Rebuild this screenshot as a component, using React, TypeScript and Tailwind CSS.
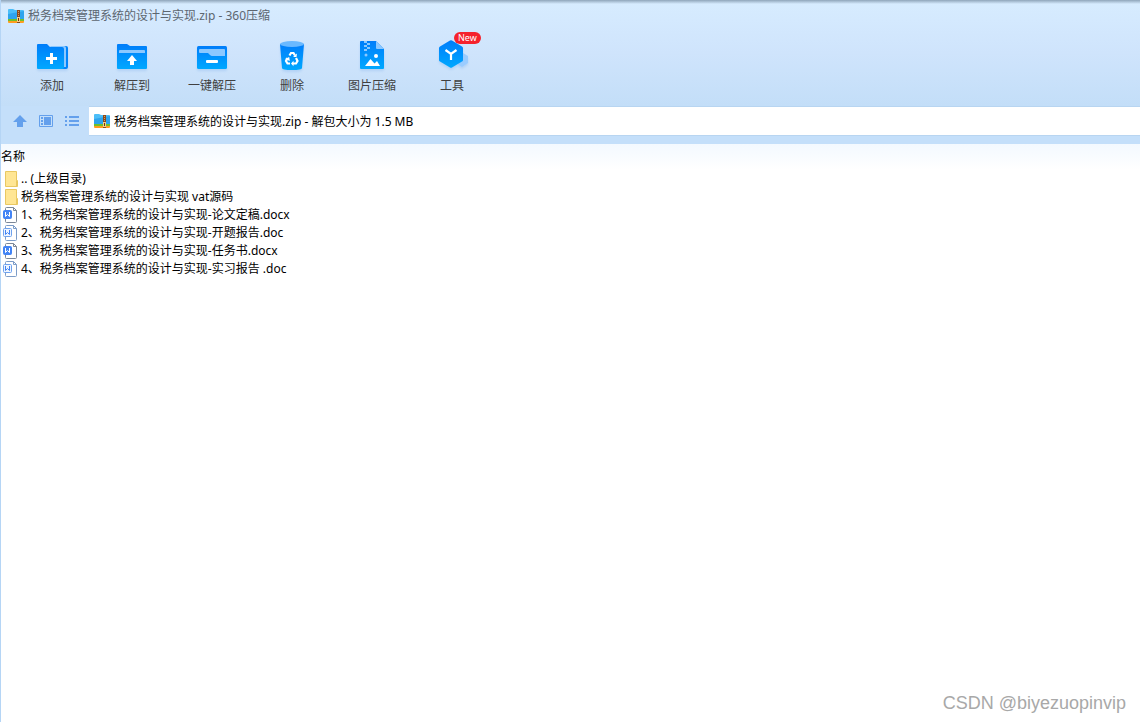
import type {ReactNode} from 'react';

const ARCHIVE = '税务档案管理系统的设计与实现.zip';

type FileKind = 'folder' | 'docx' | 'doc';

const files: {name: string; kind: FileKind}[] = [
  {name: '.. (上级目录)', kind: 'folder'},
  {name: '税务档案管理系统的设计与实现 vat源码', kind: 'folder'},
  {name: '1、税务档案管理系统的设计与实现-论文定稿.docx', kind: 'docx'},
  {name: '2、税务档案管理系统的设计与实现-开题报告.doc', kind: 'doc'},
  {name: '3、税务档案管理系统的设计与实现-任务书.docx', kind: 'docx'},
  {name: '4、税务档案管理系统的设计与实现-实习报告 .doc', kind: 'doc'},
];

function ZipIcon() {
  return (
    <svg className="shrink-0" width="16" height="14" viewBox="0 0 16 14" aria-hidden="true">
      <path d="M0 1q0-1 1-1h4l2 1h8q1 0 1 1v8H0z" fill="#4cbef8" />
      <path d="M0 5l16-3v8H0z" fill="#1b93e6" opacity=".6" />
      <path d="M0 10h16v2H0z" fill="#6fc02c" />
      <path d="M0 12h16v1q0 1-1 1H1q-1 0-1-1z" fill="#ff9d1f" />
      <path d="M9 1h3v13H9z" fill="#8a4a1c" />
      <path d="M10 2h1v1h-1zM10 4h1v1h-1zM10 6h1v1h-1z" fill="#d99a5c" />
      <path d="M9 8h3v5H9z" fill="#f6cf85" />
      <path d="M10 9h1v3h-1z" fill="#6b3410" />
    </svg>
  );
}

function ToolSvg({children}: {children: ReactNode}) {
  return (
    <svg width="36" height="36" viewBox="0 0 36 36" className="drop-shadow-[0_2px_1px_rgba(80,150,230,0.2)]" aria-hidden="true">
      {children}
    </svg>
  );
}

function AddIcon() {
  return (
    <ToolSvg>
      <path d="M18 8h14q2 0 2 2v19q0 2-2 2H18z" fill="#0084fb" />
      <path d="M16 8h14q2 0 2 2v19h-2z" fill="#8cc8ff" />
      <path d="M3 7q0-1 1-1h9l3 3h12q2 0 2 2v18q0 2-2 2H4q-1 0-1-1z" fill="url(#toolBlue)" />
      <path d="M16 15h3v4h4v3h-4v4h-3v-4h-4v-3h4z" fill="#fff" />
    </ToolSvg>
  );
}

function ExtractIcon() {
  return (
    <ToolSvg>
      <path d="M3 7q0-1 1-1h9l3 2h16q1 0 1 1v21q0 1-1 1H4q-1 0-1-1z" fill="url(#toolBlue)" />
      <path d="M5 13q0-1 1-1h24q1 0 1 1v2H5z" fill="#8cc8ff" />
      <path d="M18 17l5 6h-3v4h-4v-4h-3z" fill="#fff" />
    </ToolSvg>
  );
}

function OneKeyIcon() {
  return (
    <ToolSvg>
      <rect x="3" y="8" width="30" height="23" rx="1.500" fill="url(#toolBlue)" />
      <path d="M5 12q0-1 1-1h24q1 0 1 1v6H18q-1 0-2-1l-2-2H6q-1 0-1-1z" fill="#8cc8ff" />
      <rect x="12" y="22" width="12" height="3" rx="1" fill="#fff" />
    </ToolSvg>
  );
}

function DeleteIcon() {
  return (
    <ToolSvg>
      <path d="M6 6h24l-2 24q0 2-10 2T8 30z" fill="url(#toolBlue)" />
      <ellipse cx="18" cy="6" rx="12" ry="3" fill="#6ab9ff" />
      <path d="M15.500 17.500L17 15h2.500l1.500 2.500M22 20l1.500 3-1.500 2.500h-3M16 25.500h-2.500l-1.500-2.500 1.500-3" fill="none" stroke="#fff" strokeWidth="2.200" />
      <path d="M19 19h3.500l.5-3.500zM19.500 22.800v5.400L17 25.500zM11 21l4.200-2 .6 4z" fill="#fff" />
    </ToolSvg>
  );
}

function ImageIcon() {
  return (
    <ToolSvg>
      <path d="M6 4q0-1 1-1h15l8 8v19q0 1-1 1H7q-1 0-1-1z" fill="url(#toolBlue)" />
      <path d="M22 3l8 8h-7q-1 0-1-1z" fill="#8cc8ff" />
      <path d="M10 3h3v2h-3zM13 5h3v2h-3zM10 7h3v2h-3zM13 9h3v2h-3zM10 11h3v2h-3z" fill="#8cc8ff" />
      <circle cx="12" cy="17" r="1.500" fill="#8cc8ff" />
      <circle cx="22" cy="18" r="2" fill="#fff" />
      <path d="M11 28l5.500-7 4 4.500 2.500-2.500 3 5z" fill="#fff" />
    </ToolSvg>
  );
}

function ToolsIcon() {
  return (
    <ToolSvg>
      <path d="M29 15l5 3v7l-6 4-6-4z" fill="#9accff" />
      <path d="M16 2.500q1-.6 2 0l10 6q1 .5 1 1.500v12q0 1-1 1.500l-10 6q-1 .5-2 0l-10-6q-1-.5-1-1.500V10q0-1 1-1.500z" fill="url(#toolBlue)" />
      <path d="M11.500 12l5.500 4 5.500-4M17 16v6" fill="none" stroke="#fff" strokeWidth="2.200" />
    </ToolSvg>
  );
}

const tools: {label: string; icon: ReactNode; badge?: string}[] = [
  {label: '添加', icon: <AddIcon />},
  {label: '解压到', icon: <ExtractIcon />},
  {label: '一键解压', icon: <OneKeyIcon />},
  {label: '删除', icon: <DeleteIcon />},
  {label: '图片压缩', icon: <ImageIcon />},
  {label: '工具', icon: <ToolsIcon />, badge: 'New'},
];

function FileIcon({kind}: {kind: FileKind}) {
  if (kind === 'folder') {
    return (
      <svg width="16" height="16" viewBox="0 0 16 16" aria-hidden="true">
        <path d="M2.500.5h11v9h1v6h-12z" fill="#ffe694" stroke="#e9c862" />
        <path d="M13.500 9.500v6" stroke="#e9c862" />
      </svg>
    );
  }
  const solid = kind === 'docx';
  const edge = solid ? '#7b8797' : '#7c9cc8';
  return (
    <svg width="16" height="16" viewBox="0 0 16 16" aria-hidden="true">
      <path d="M2.500 1.500q0-1 1-1h7l3 3v11q0 1-1 1h-9q-1 0-1-1z" fill="#fff" stroke={edge} />
      <path d="M10.500.5v3h3" fill="none" stroke={edge} />
      <rect x=".5" y="3.500" width="8" height="8" rx="1" fill={solid ? '#4284f5' : '#eef5ff'} stroke={solid ? '#4284f5' : '#6fa2ee'} />
      <path d="M2.500 5v4.500l2-2 2 2V5" fill="none" stroke={solid ? '#fff' : '#4284f5'} />
    </svg>
  );
}

function NavButtons() {
  return (
    <div className="flex w-22 shrink-0 items-center gap-2.5 pl-[11px]">
      <button type="button" aria-label="向上">
        <svg width="16" height="16" viewBox="0 0 16 16" fill="#64a0ec">
          <path d="M8 2l7 7h-4v5H5V9H1z" />
        </svg>
      </button>
      <button type="button" aria-label="预览">
        <svg width="16" height="16" viewBox="0 0 16 16" fill="#64a0ec">
          <path d="M1.500 2.500h13v11h-13z" fill="none" stroke="#64a0ec" />
          <path d="M3 4h2v2H3zM3 7h2v2H3zM3 10h2v2H3zM6 4h7v8H6z" />
        </svg>
      </button>
      <button type="button" aria-label="列表">
        <svg width="16" height="16" viewBox="0 0 16 16" fill="#64a0ec">
          <path d="M1 3h2v2H1zM1 7h2v2H1zM1 11h2v2H1zM5 3h10v2H5zM5 7h10v2H5zM5 11h10v2H5z" />
        </svg>
      </button>
    </div>
  );
}

export default function App() {
  return (
    <div className="relative flex min-h-screen flex-col border-l border-[#b5d5f5] bg-white font-['Noto_Sans','Noto_Sans_CJK_SC',sans-serif] text-xs text-black">
      <svg width="0" height="0" className="absolute" aria-hidden="true">
        <linearGradient id="toolBlue" x1="0" y1="0" x2="0" y2="1">
          <stop offset="0" stopColor="#007dfa" />
          <stop offset="1" stopColor="#00a8ff" />
        </linearGradient>
      </svg>

      <header className="bg-linear-to-b from-[#d7ecff] via-[#cfe4fc] to-[#c3def8]">
        <div className="h-1 bg-linear-to-b from-[#8fa5ba] to-transparent" />
        <div className="flex h-6 items-center gap-1 pl-[7px]">
          <ZipIcon />
          <h1 className="text-[#5c6670]">{ARCHIVE} - 360压缩</h1>
        </div>
        <nav className="flex h-[78px] pt-2.5 pl-[11px]">
          {tools.map((tool) => (
            <button key={tool.label} type="button" className="relative flex w-20 flex-col items-center text-[#404040]">
              {tool.icon}
              <span className="mt-1 leading-4">{tool.label}</span>
              {tool.badge && (
                <span className="absolute -top-1.5 left-10.5 h-3 rounded-full bg-[#f5222d] px-1 text-[9px] leading-3 text-white">
                  {tool.badge}
                </span>
              )}
            </button>
          ))}
        </nav>
      </header>

      <div className="flex h-9.5 bg-[#c4dffa] pb-2">
        <NavButtons />
        <div className="flex grow items-center gap-1 border-y border-[#b8d5f1] bg-white pl-[5px]">
          <ZipIcon />
          <input
            type="text"
            readOnly
            aria-label="路径"
            value={`${ARCHIVE} - 解包大小为 1.5 MB`}
            className="min-w-0 grow bg-transparent pt-0.5 outline-none"
          />
        </div>
      </div>

      <main className="grow">
        <table className="w-full text-left">
          <thead>
            <tr className="h-6.5 bg-linear-to-b from-[#f3f9ff] to-white">
              <th className="p-0 font-normal leading-6">名称</th>
            </tr>
          </thead>
          <tbody>
            {files.map((file) => (
              <tr key={file.name} className="h-4.5">
                <td className="p-0">
                  <div className="flex h-4.5 items-center gap-0.5 pl-0.5 whitespace-pre">
                    <FileIcon kind={file.kind} />
                    <span>{file.name}</span>
                  </div>
                </td>
              </tr>
            ))}
          </tbody>
        </table>
      </main>

      <p className="absolute right-3.5 bottom-[7px] font-['Liberation_Sans',sans-serif] text-lg leading-6 text-[#a8a8a8] [text-shadow:-1px_-1px_0_#fff]">
        CSDN @biyezuopinvip
      </p>
    </div>
  );
}
